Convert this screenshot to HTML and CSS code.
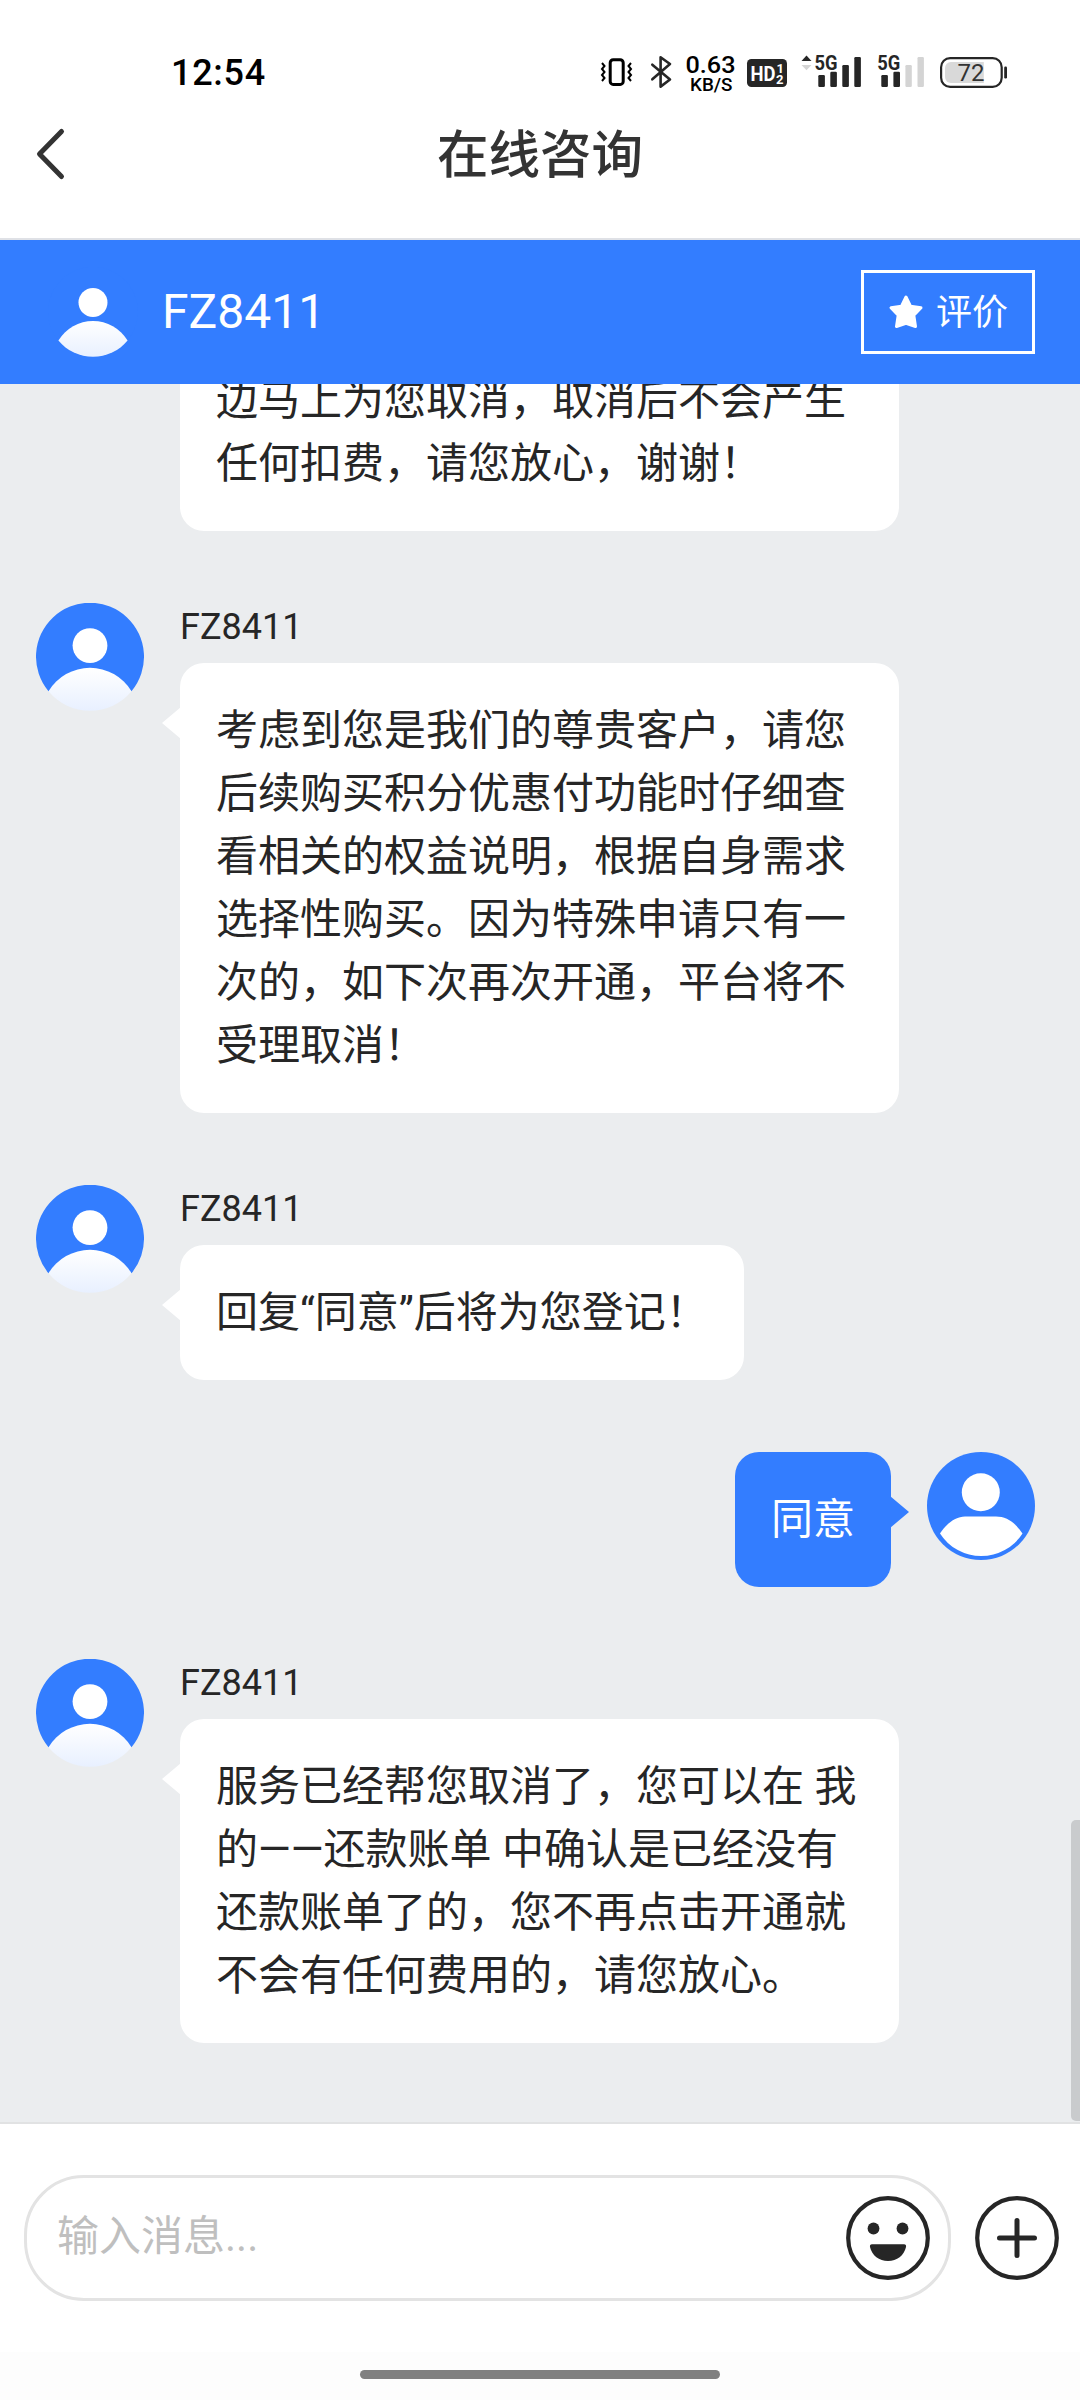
FILE: index.html
```html
<!DOCTYPE html>
<html lang="zh-CN">
<head>
<meta charset="utf-8">
<title>在线咨询</title>
<link rel="stylesheet" href="styles.css">
</head>
<body>
<svg class="defs" width="0" height="0" aria-hidden="true">
  <defs>
    <linearGradient id="body-fill" x1="0" y1="0" x2="0" y2="1">
      <stop offset="0" stop-color="#fff"/>
      <stop offset="1" stop-color="#e8f0ff"/>
    </linearGradient>
    <symbol id="agent" viewBox="0 0 108 108">
      <path d="M12.5 88.3A54 54 0 1 1 95.5 88.3Q54 62 12.5 88.3Z" fill="#337dff"/>
      <circle cx="54" cy="42.6" r="17.4" fill="#fff"/>
      <path d="M12.5 88.3A48.4 48.4 0 0 1 95.5 88.3A54 54 0 0 1 12.5 88.3Z" fill="url(#body-fill)"/>
    </symbol>
    <symbol id="customer" viewBox="0 0 108 108">
      <circle cx="54" cy="54" r="54" fill="#337dff"/>
      <circle cx="53.8" cy="40.2" r="19" fill="#fff"/>
      <path d="M13 81.5C20 71 29 64.5 38 64.5H69C79 64.5 88 70 95.5 81.5A49 49 0 0 1 13 81.5Z" fill="#fff"/>
    </symbol>
  </defs>
</svg>
<div class="screen">
  <header class="top">
    <div class="status">
      <span class="time">12:54</span>
      <svg class="status-icons" width="420" height="48" viewBox="595 48 420 48">
        <rect x="610.2" y="59.8" width="13" height="24.6" rx="3" fill="none" stroke="#000" stroke-width="3"/>
        <path d="M602 63l2.5 3-2.5 3 2.5 3-2.5 3 2.5 3-2.5 3M631 63l-2.5 3 2.5 3-2.5 3 2.5 3-2.5 3 2.5 3" fill="none" stroke="#000" stroke-width="2"/>
        <path d="M652.3 64.7L670 79.5 660.6 86.6V57.2L670 64 652.3 79.3" fill="none" stroke="#262626" stroke-width="2.6" stroke-linejoin="round" stroke-linecap="round"/>
        <text x="685.5" y="73" font-size="24" font-weight="500" textLength="50" lengthAdjust="spacingAndGlyphs">0.63</text>
        <text x="690" y="90.5" font-size="18" font-weight="500" textLength="42.5" lengthAdjust="spacingAndGlyphs">KB/S</text>
        <rect x="747" y="59" width="40" height="28" rx="4.5" fill="#262626"/>
        <text x="750.5" y="80.700" font-size="21" font-weight="700" fill="#fff" textLength="25" lengthAdjust="spacingAndGlyphs">HD</text>
        <text x="776.5" y="72.5" font-size="13" font-weight="700" fill="#fff">1</text>
        <text x="776" y="83.7" font-size="13" font-weight="700" fill="#fff">2</text>
        <path d="M801.5 61l5-5.4 5 5.4z" fill="#262626"/>
        <path d="M801.5 65l5 5.2 5-5.2z" fill="#d4d4d4"/>
        <text x="814.5" y="70.2" font-size="20" font-weight="700" fill="#262626" textLength="23" lengthAdjust="spacingAndGlyphs">5G</text>
        <g fill="#262626">
          <rect x="818.3" y="75" width="6.6" height="12" rx="1.2"/>
          <rect x="830.3" y="71.8" width="6.6" height="15.2" rx="1.2"/>
          <rect x="842.3" y="65" width="6.6" height="22" rx="1.2"/>
          <rect x="854.3" y="57" width="6.6" height="30" rx="1.2"/>
          <rect x="881.3" y="75" width="6.6" height="12" rx="1.2"/>
          <rect x="893.4" y="71.8" width="6.6" height="15.2" rx="1.2"/>
        </g>
        <text x="877.3" y="70.2" font-size="20" font-weight="700" fill="#262626" textLength="23" lengthAdjust="spacingAndGlyphs">5G</text>
        <rect x="905.4" y="65" width="6.4" height="22" rx="1.2" fill="#d4d4d4"/>
        <rect x="917.5" y="57" width="6.4" height="30" rx="1.2" fill="#d4d4d4"/>
        <path d="M983.8 62H951a6 6 0 0 0-6 6v9a6 6 0 0 0 6 6H983.8z" fill="#d9d9d9"/>
        <rect x="941.1" y="58.2" width="60.6" height="28.6" rx="9" fill="none" stroke="#262626" stroke-width="2.2"/>
        <rect x="1004.2" y="66.5" width="2.8" height="12" rx="1.2" fill="#262626"/>
        <text x="957.5" y="81" font-size="24" fill="#333">72</text>
      </svg>
    </div>
    <div class="navbar">
      <svg class="back" width="36" height="60" viewBox="0 0 36 60"><path d="M28.5 7.5L6.5 30l22 22.5" fill="none" stroke="#333" stroke-width="5" stroke-linecap="round" stroke-linejoin="round"/></svg>
      <h1 class="title">在线咨询</h1>
    </div>
  </header>

  <section class="agent-bar">
    <svg class="agent-avatar" width="90" height="90"><use href="#agent"/></svg>
    <span class="agent-name">FZ8411</span>
    <button class="rate">
      <svg width="36" height="36" viewBox="0 0 36 36"><path d="M18 3L22.5 12.2 33 13.8 25.8 21.3 27.5 32.5 18 29.4 8.5 32.5 10.2 21.3 3 13.8 13.5 12.2Z" fill="#fff" stroke="#fff" stroke-width="3" stroke-linejoin="round"/></svg>
      <span>评价</span>
    </button>
  </section>

  <main class="chat">
    <div class="msg">
      <div class="content"><div class="bubble wide">边马上为您取消，取消后不会产生<br>任何扣费，请您放心，谢谢！</div></div>
    </div>
    <div class="msg">
      <svg class="avatar" width="108" height="108"><use href="#agent"/></svg>
      <div class="content">
        <div class="name">FZ8411</div>
        <div class="bubble wide tail">考虑到您是我们的尊贵客户，请您<br>后续购买积分优惠付功能时仔细查<br>看相关的权益说明，根据自身需求<br>选择性购买。因为特殊申请只有一<br>次的，如下次再次开通，平台将不<br>受理取消！</div>
      </div>
    </div>
    <div class="msg">
      <svg class="avatar" width="108" height="108"><use href="#agent"/></svg>
      <div class="content">
        <div class="name">FZ8411</div>
        <div class="bubble short tail">回复“同意”后将为您登记！</div>
      </div>
    </div>
    <div class="msg mine">
      <div class="bubble tail">同意</div>
      <svg class="avatar" width="108" height="108"><use href="#customer"/></svg>
    </div>
    <div class="msg">
      <svg class="avatar" width="108" height="108"><use href="#agent"/></svg>
      <div class="content">
        <div class="name">FZ8411</div>
        <div class="bubble wide tail">服务已经帮您取消了，您可以在 我<br>的——还款账单 中确认是已经没有<br>还款账单了的，您不再点击开通就<br>不会有任何费用的，请您放心。</div>
      </div>
    </div>
    <div class="scrollbar"></div>
  </main>

  <footer class="composer">
    <div class="input">
      <span class="placeholder">输入消息...</span>
      <svg width="84" height="84" viewBox="0 0 84 84">
        <circle cx="42" cy="42" r="39.8" fill="none" stroke="#262626" stroke-width="4.2"/>
        <circle cx="27.5" cy="32.5" r="5.9" fill="#262626"/>
        <circle cx="56.5" cy="32.5" r="5.9" fill="#262626"/>
        <path d="M26 48.3H58Q60.5 48.3 60 51C58 59.5 51 65 42 65S26 59.5 24 51Q23.500 48.3 26 48.3Z" fill="#262626"/>
      </svg>
    </div>
    <svg width="84" height="84" viewBox="0 0 84 84">
      <circle cx="42" cy="42" r="39.8" fill="none" stroke="#262626" stroke-width="4.2"/>
      <path d="M42 24.5V59.5M24.5 42H59.5" fill="none" stroke="#262626" stroke-width="5" stroke-linecap="round"/>
    </svg>
  </footer>
  <div class="gesture"><div class="pill"></div></div>
</div>
</body>
</html>
```
FILE: styles.css
```css
* { box-sizing: border-box; }
body {
  margin: 0;
  background: #fff;
  color: #262626;
  font-family: Roboto, "Noto Sans CJK SC", sans-serif;
}
svg { display: block; flex: none; }
.defs { position: absolute; }
.screen {
  width: 1080px;
  height: 2400px;
  display: flex;
  flex-direction: column;
  overflow: hidden;
}
.top {
  height: 240px;
  border-bottom: 2px solid #dfe1e6;
}
.status {
  height: 96px;
  padding: 48px 65px 0 171px;
  display: flex;
  justify-content: space-between;
}
.time {
  color: #000;
  font-size: 36px;
  font-weight: 500;
  line-height: 50px;
  letter-spacing: 0.7px;
}
.status-icons { font-family: Roboto, sans-serif; }
.navbar {
  height: 116px;
  padding: 0 33px;
  display: grid;
  grid-template-columns: 36px 1fr 36px;
  align-items: center;
}
.title {
  margin: 0;
  padding-top: 4px;
  text-align: center;
  color: #333;
  font-size: 51.5px;
  font-weight: 500;
  line-height: 72px;
}
.agent-bar {
  height: 144px;
  flex: none;
  padding: 0 45px 0 48px;
  display: flex;
  align-items: center;
  background: #337dff;
  color: #fff;
}
.agent-name {
  flex: 1;
  margin-left: 24px;
  font-size: 48px;
  line-height: 56px;
}
.rate {
  width: 174px;
  height: 84px;
  padding: 2px 0 0;
  display: flex;
  align-items: center;
  justify-content: center;
  gap: 12px;
  border: 3px solid #fff;
  background: none;
  color: #fff;
  font: 36px/54px Roboto, "Noto Sans CJK SC", sans-serif;
}
.rate svg { margin-top: -2px; }
.chat {
  position: relative;
  height: 1740px;
  flex: none;
  padding: 0 45px 79px 36px;
  display: flex;
  flex-direction: column;
  justify-content: flex-end;
  gap: 72px;
  overflow: hidden;
  background: #ebedef;
  border-bottom: 2px solid #e1e2e3;
}
.msg {
  display: flex;
  align-items: flex-start;
  gap: 36px;
}
.msg:first-child { padding-left: 144px; }
.mine { justify-content: flex-end; }
.name {
  height: 60px;
  font-size: 36px;
  line-height: 48px;
}
.bubble {
  position: relative;
  padding: 36px;
  border-radius: 24px;
  background: #fff;
  font-size: 42px;
  line-height: 63px;
  white-space: nowrap;
}
.wide { width: 719px; }
.short { width: 564px; }
.tail::before {
  content: "";
  position: absolute;
  top: 44px;
  left: -18px;
  width: 19px;
  height: 32px;
  background: inherit;
  clip-path: polygon(0 50%, 100% 0, 100% 100%);
}
.mine .bubble { background: #337dff; color: #fff; }
.mine .tail::before {
  left: auto;
  right: -18px;
  clip-path: polygon(100% 50%, 0 0, 0 100%);
}
.scrollbar {
  position: absolute;
  right: 0;
  bottom: 1px;
  width: 9px;
  height: 301px;
  border-radius: 5px 0 0 5px;
  background: #c9cbcd;
}
.composer {
  height: 228px;
  flex: none;
  padding: 0 21px 0 24px;
  display: flex;
  align-items: center;
  justify-content: space-between;
}
.input {
  width: 927px;
  height: 126px;
  padding: 0 18px 0 30px;
  display: flex;
  align-items: center;
  justify-content: space-between;
  border: 3px solid #e3e3e3;
  border-radius: 60px;
}
.placeholder {
  padding-bottom: 3px;
  color: #bfbfbf;
  font-size: 42px;
  line-height: 63px;
}
.gesture {
  height: 48px;
  padding-top: 18px;
  background: #fdfdfd;
}
.pill {
  width: 360px;
  height: 9px;
  margin: 0 auto;
  border-radius: 5px;
  background: #808080;
}
```
